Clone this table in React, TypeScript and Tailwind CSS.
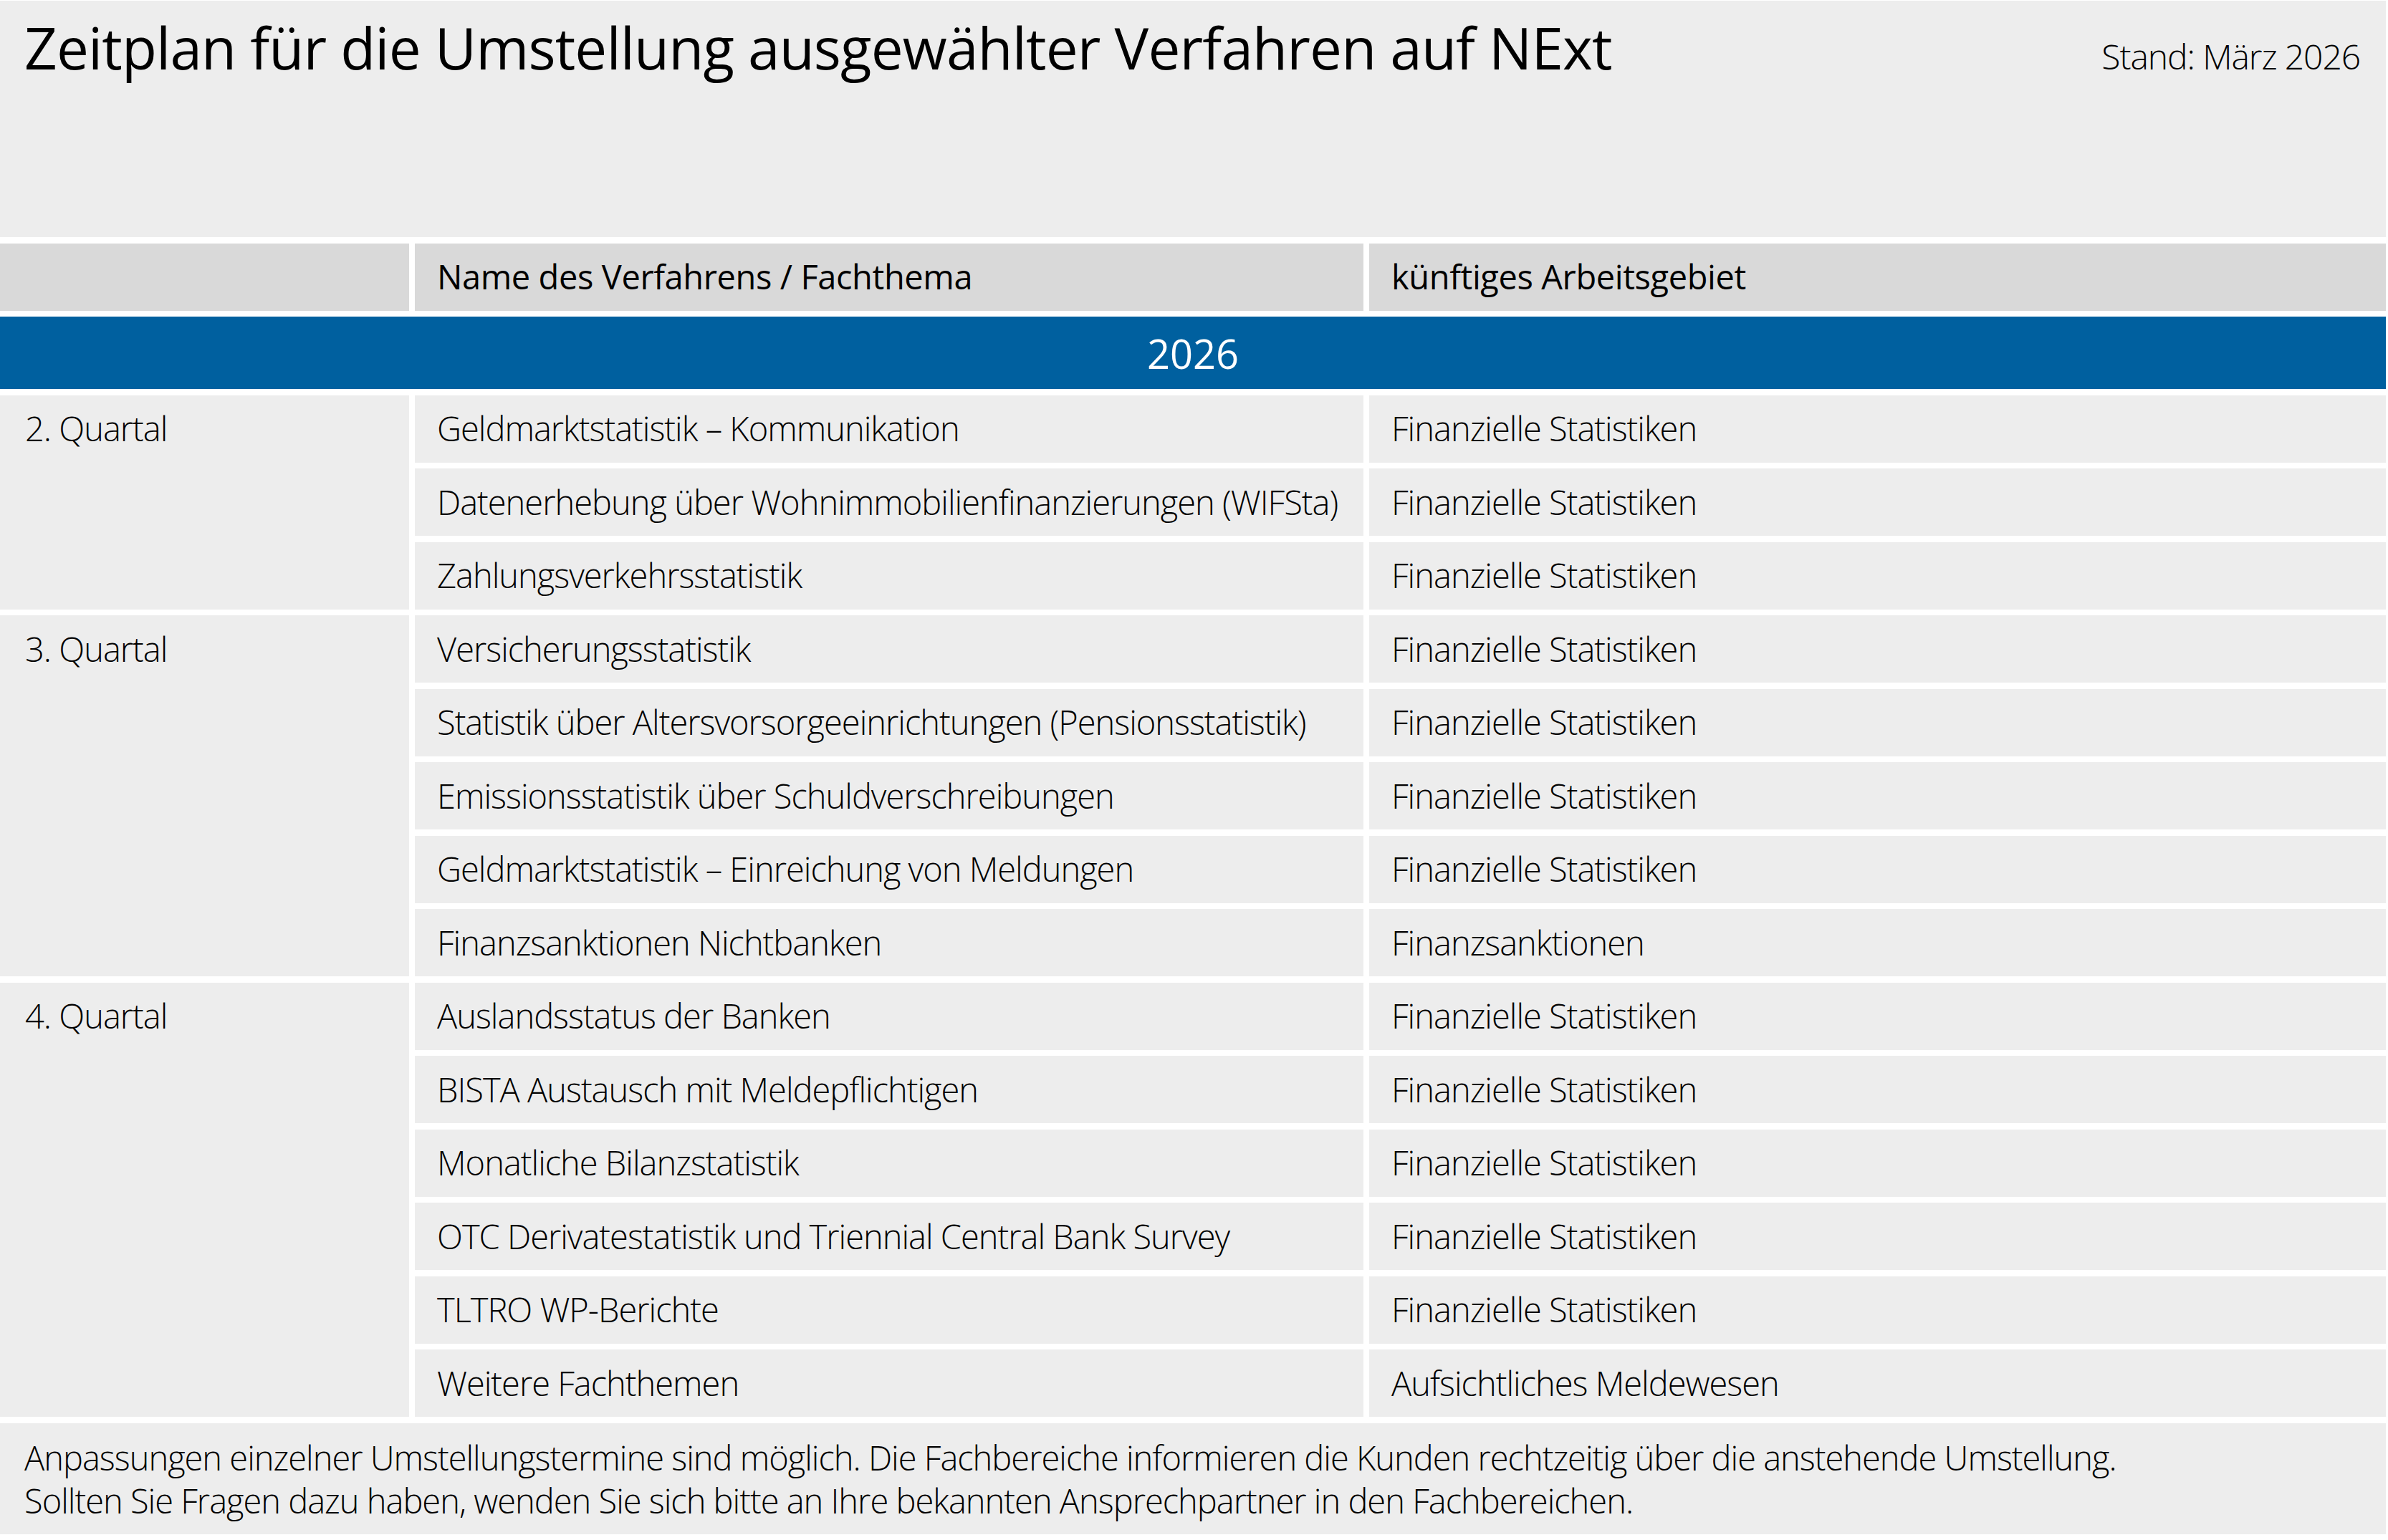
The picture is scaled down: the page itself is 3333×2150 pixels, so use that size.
import React from "react";

type Row = { name: string; area: string };
type Group = { quarter: string; span: string; rows: Row[] };

const FS = "Finanzielle Statistiken";

const groups: Group[] = [
  {
    quarter: "2. Quartal",
    span: "row-span-3",
    rows: [
      { name: "Geldmarktstatistik – Kommunikation", area: FS },
      { name: "Datenerhebung über Wohnimmobilienfinanzierungen (WIFSta)", area: FS },
      { name: "Zahlungsverkehrsstatistik", area: FS },
    ],
  },
  {
    quarter: "3. Quartal",
    span: "row-span-5",
    rows: [
      { name: "Versicherungsstatistik", area: FS },
      { name: "Statistik über Altersvorsorgeeinrichtungen (Pensionsstatistik)", area: FS },
      { name: "Emissionsstatistik über Schuldverschreibungen", area: FS },
      { name: "Geldmarktstatistik – Einreichung von Meldungen", area: FS },
      { name: "Finanzsanktionen Nichtbanken", area: "Finanzsanktionen" },
    ],
  },
  {
    quarter: "4. Quartal",
    span: "row-span-6",
    rows: [
      { name: "Auslandsstatus der Banken", area: FS },
      { name: "BISTA Austausch mit Meldepflichtigen", area: FS },
      { name: "Monatliche Bilanzstatistik", area: FS },
      { name: "OTC Derivatestatistik und Triennial Central Bank Survey", area: FS },
      { name: "TLTRO WP-Berichte", area: FS },
      { name: "Weitere Fachthemen", area: "Aufsichtliches Meldewesen" },
    ],
  },
];

export default function App() {
  return (
    <div className="w-[3333px] h-[2150px] bg-white pt-px font-['Open_Sans',sans-serif] text-black">
      <div className="w-[3330px] flex flex-col gap-[8.5px]">
        {/* title */}
        <div className="h-[330px] bg-[#ededed] flex items-baseline justify-between pl-[34px] pr-[36px] pt-[25px]">
          <h1 className="text-[80px] leading-none font-medium tracking-[-0.85px]">
            Zeitplan für die Umstellung ausgewählter Verfahren auf NExt
          </h1>
          <span className="text-[48px] leading-none font-light tracking-[-1.1px]">Stand: März 2026</span>
        </div>

        {/* header */}
        <div className="grid grid-cols-[571px_1324px_1419px] gap-x-[8px] h-[94px] text-[47px] font-normal tracking-[-0.4px]">
          <div className="bg-[#d9d9d9]" />
          <div className="bg-[#d9d9d9] flex items-center pl-[31px]">Name des Verfahrens / Fachthema</div>
          <div className="bg-[#d9d9d9] flex items-center pl-[31px]">künftiges Arbeitsgebiet</div>
        </div>

        {/* year band */}
        <div className="h-[101px] bg-[#00609f] flex items-center justify-center text-white text-[56px] font-medium">
          2026
        </div>

        {/* data rows */}
        <div className="grid grid-cols-[571px_1324px_1419px] auto-rows-[94px] gap-x-[8px] gap-y-[8.5px] text-[47px] font-light tracking-[-1px]">
          {groups.map((g) => (
            <React.Fragment key={g.quarter}>
              <div className={`${g.span} col-start-1 bg-[#ededed] pl-[35px] h-full`}>
                <div className="h-[94px] flex items-center">{g.quarter}</div>
              </div>
              {g.rows.map((r) => (
                <React.Fragment key={r.name}>
                  <div className="col-start-2 bg-[#ededed] flex items-center pl-[31px] whitespace-nowrap">
                    {r.name}
                  </div>
                  <div className="col-start-3 bg-[#ededed] flex items-center pl-[31px] whitespace-nowrap">
                    {r.area}
                  </div>
                </React.Fragment>
              ))}
            </React.Fragment>
          ))}
        </div>

        {/* footnote */}
        <div className="h-[155px] bg-[#ededed] pl-[34px] pt-[18px] text-[47px] leading-[60px] font-light tracking-[-1px]">
          <p>
            Anpassungen einzelner Umstellungstermine sind möglich. Die Fachbereiche informieren die Kunden rechtzeitig über die anstehende Umstellung.
          </p>
          <p>Sollten Sie Fragen dazu haben, wenden Sie sich bitte an Ihre bekannten Ansprechpartner in den Fachbereichen.</p>
        </div>
      </div>
    </div>
  );
}
